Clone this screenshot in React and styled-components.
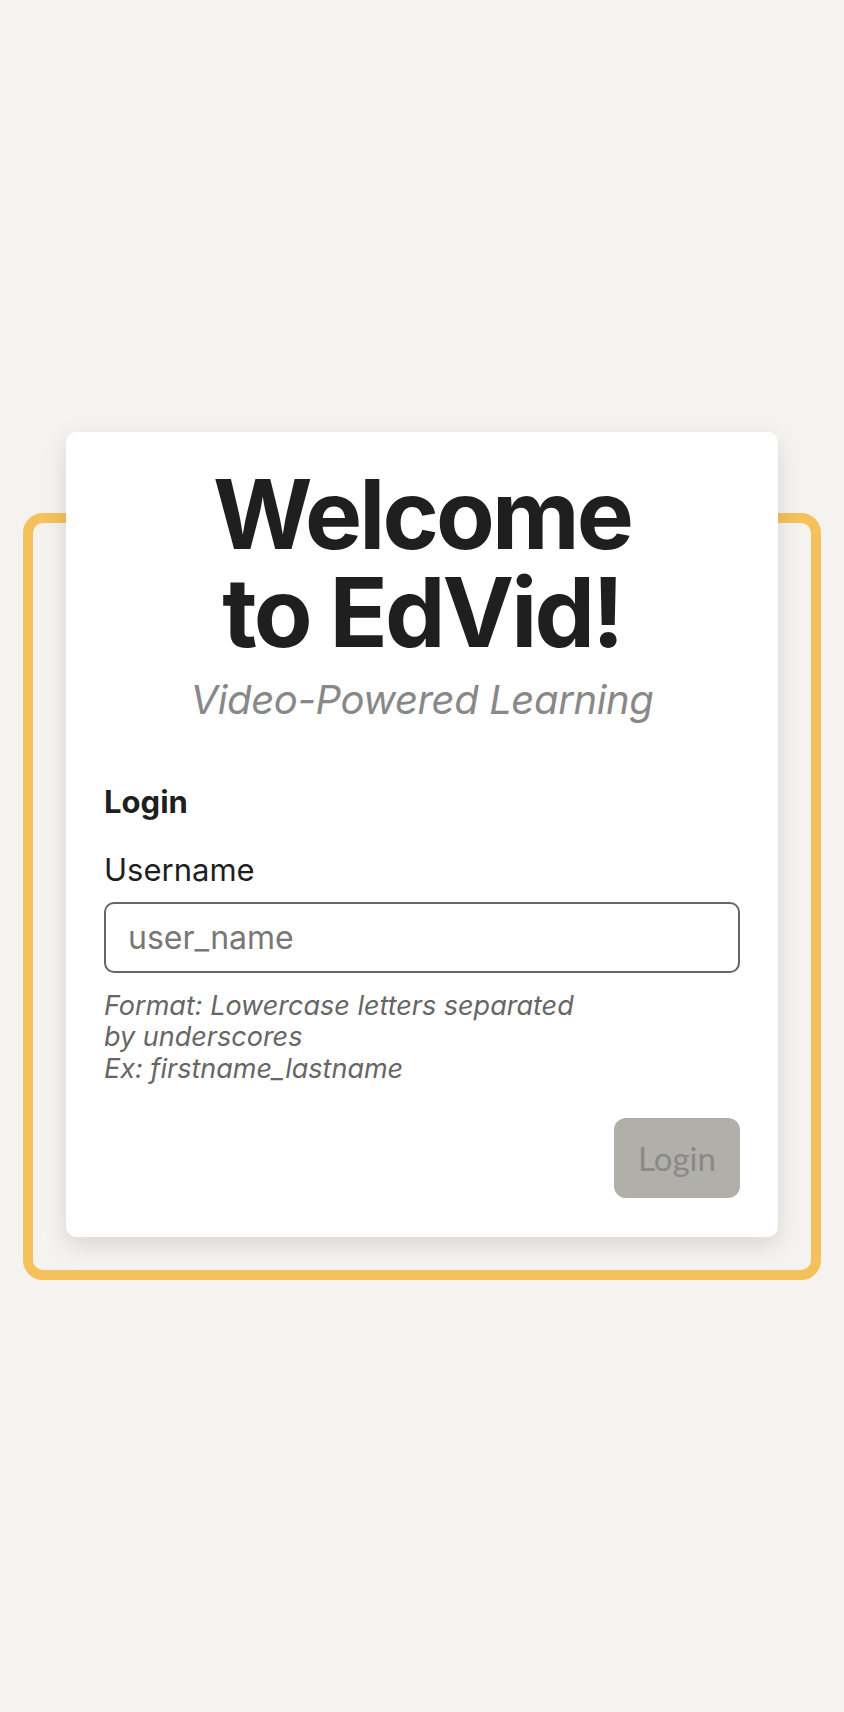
import React from 'react'
import styled, { createGlobalStyle } from 'styled-components'

const GlobalStyle = createGlobalStyle`
  body {
    margin: 0;
    background-color: #f5f3ef;
    font-family: Inter, 'Noto Sans', sans-serif;
    color: #1f1f1f;
  }
`

const Page = styled.main`
  min-height: 100vh;
  display: flex;
  align-items: center;
  justify-content: center;
`

const Stage = styled.div`
  position: relative;
  width: 712px;
  padding-bottom: 43px;
`

const Frame = styled.div`
  position: absolute;
  top: 81px;
  bottom: 0;
  left: -43px;
  right: -43px;
  border: 10px solid #f5c15b;
  border-radius: 20px;
`

const Card = styled.section`
  position: relative;
  background: #ffffff;
  border-radius: 10px;
  box-shadow: 0 8px 24px rgba(0, 0, 0, 0.12);
  padding: 33px 38px 39px;
  display: flex;
  flex-direction: column;
`

const Title = styled.h1`
  margin: 0;
  text-align: center;
  font-size: 96px;
  line-height: 98px;
  font-weight: 700;
  letter-spacing: -0.03em;
  color: #1f1f1f;
`

const Tagline = styled.p`
  margin: 14px 0 0;
  text-align: center;
  font-size: 40px;
  font-style: italic;
  color: #888888;
  letter-spacing: -0.01em;
`

const Form = styled.form`
  display: flex;
  flex-direction: column;
  margin-top: 59px;
`

const Heading = styled.h2`
  margin: 0;
  font-size: 31px;
  font-weight: 700;
  color: #1f1f1f;
`

const Label = styled.label`
  margin-top: 31px;
  font-size: 31px;
  color: #1f1f1f;
`

const Input = styled.input`
  margin-top: 14px;
  height: 71px;
  box-sizing: border-box;
  border: 2.5px solid #666666;
  border-radius: 10px;
  padding: 0 22px;
  font-family: Inter, 'Noto Sans', sans-serif;
  font-size: 32px;
  color: #1f1f1f;
  &::placeholder {
    color: #777777;
  }
`

const Hint = styled.p`
  margin: 17px 0 0;
  max-width: 490px;
  font-size: 27px;
  line-height: 31.5px;
  font-style: italic;
  color: #666666;
`

const Actions = styled.div`
  display: flex;
  justify-content: flex-end;
  margin-top: 34px;
`

const Button = styled.button`
  width: 126px;
  height: 80px;
  border: none;
  border-radius: 12px;
  background: #b0afaa;
  color: #8a8987;
  font-family: Lato, 'Open Sans', sans-serif;
  font-size: 33px;
`

export default function App() {
  return (
    <>
      <GlobalStyle />
      <Page>
        <Stage>
          <Frame />
          <Card>
            <Title>
              Welcome
              <br />
              to EdVid!
            </Title>
            <Tagline>Video-Powered Learning</Tagline>
            <Form onSubmit={(e) => e.preventDefault()}>
              <Heading>Login</Heading>
              <Label htmlFor="username">Username</Label>
              <Input id="username" placeholder="user_name" />
              <Hint>
                Format: Lowercase letters separated by underscores
                <br />
                Ex: firstname_lastname
              </Hint>
              <Actions>
                <Button type="submit" disabled>
                  Login
                </Button>
              </Actions>
            </Form>
          </Card>
        </Stage>
      </Page>
    </>
  )
}
